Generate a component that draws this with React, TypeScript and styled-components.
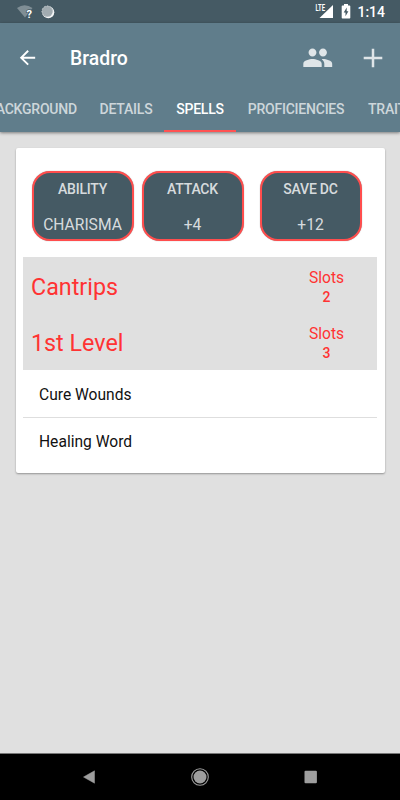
import React from "react";
import styled, { createGlobalStyle } from "styled-components";

const GlobalStyle = createGlobalStyle`
  *, *::before, *::after { box-sizing: border-box; }
  html, body { margin: 0; padding: 0; overflow: hidden; }
  body { font-family: Roboto, "Liberation Sans", sans-serif; }
`;

const Screen = styled.div`
  width: 400px;
  height: 800px;
  display: flex;
  flex-direction: column;
  overflow: hidden;
  background: #e0e0e0;
`;

const StatusBar = styled.header`
  height: 23px;
  flex: none;
  display: flex;
  align-items: center;
  padding: 0 15px 0 16px;
  background: #455a64;
  color: #fff;
`;

const StatusGroup = styled.div<{ $gap: number }>`
  display: flex;
  align-items: center;
  gap: ${(p) => p.$gap}px;
`;

const Spacer = styled.div`
  flex: 1;
`;

const Clock = styled.span`
  font-size: 14px;
  font-weight: 500;
  line-height: 23px;
  margin-left: 6px;
  padding-top: 1px;
`;

const Header = styled.div`
  height: 109px;
  flex: none;
  background: #607d8b;
  box-shadow: 0 1px 3px rgba(0, 0, 0, 0.45);
`;

const Toolbar = styled.div`
  height: 63px;
  display: flex;
  align-items: center;
  padding: 8px 0 0 16px;
`;

const IconButton = styled.button<{ $width: number }>`
  width: ${(p) => p.$width}px;
  height: 32px;
  padding: 0 0 1px;
  border: 0;
  background: none;
  display: flex;
  align-items: center;
  justify-content: center;
`;

const Title = styled.h1`
  flex: 1;
  margin: 0;
  padding: 0 0 0 31px;
  font-size: 19.4px;
  font-weight: 500;
  line-height: 24px;
  color: #fff;
`;

const Tabs = styled.nav`
  height: 46px;
  display: flex;
  justify-content: flex-start;
  overflow: hidden;
`;

const Tab = styled.a<{ $active?: boolean; $width: number; $shift?: number }>`
  flex: none;
  width: ${(p) => p.$width}px;
  margin-left: ${(p) => p.$shift ?? 0}px;
  display: flex;
  align-items: center;
  justify-content: center;
  padding-top: 2px;
  border-bottom: 2px solid ${(p) => (p.$active ? "#ff5252" : "transparent")};
  font-size: 14px;
  font-weight: 500;
  letter-spacing: -0.22px;
  white-space: nowrap;
  color: ${(p) => (p.$active ? "#fff" : "rgba(255,255,255,0.7)")};
`;

const Card = styled.main`
  margin: 16px 15px 0 15.5px;
  height: 325px;
  padding: 23px 8px 0 7.5px;
  border-radius: 2px;
  background: #fff;
  box-shadow: 0 1px 2px rgba(0, 0, 0, 0.35);
`;

const Stats = styled.section`
  display: flex;
  height: 86px;
  padding-left: 8.5px;
`;

const Stat = styled.div<{ $gap?: number }>`
  width: 102px;
  height: 70px;
  margin-left: ${(p) => p.$gap ?? 0}px;
  border: 2px solid #ff4d4d;
  border-radius: 18px;
  background: #455a64;
  box-shadow: 0 0 1px rgba(0, 0, 0, 0.45);
  display: flex;
  flex-direction: column;
  align-items: center;
  color: rgba(255, 255, 255, 0.8);
`;

const StatLabel = styled.span`
  margin-top: 8px;
  font-size: 14px;
  font-weight: 500;
  letter-spacing: -0.22px;
  line-height: 16px;
`;

const StatValue = styled.span`
  margin-top: 18px;
  font-size: 15.6px;
  line-height: 20px;
`;

const LevelRow = styled.div`
  height: 56.5px;
  padding: 0 31px 0 8px;
  display: flex;
  justify-content: space-between;
  align-items: center;
  background: #e0e0e0;
  color: #ff3333;
`;

const LevelName = styled.h2`
  margin: 0;
  padding-top: 3px;
  font-size: 23.3px;
  font-weight: 400;
  line-height: 28px;
`;

const Slots = styled.div`
  width: 39px;
  padding-top: 3px;
  display: flex;
  flex-direction: column;
  align-items: center;
  font-size: 15.6px;
  line-height: 20px;
`;

const SlotCount = styled.strong`
  font-size: 14px;
  font-weight: 500;
  line-height: 18px;
`;

const Spell = styled.div`
  height: 47px;
  padding: 2px 16px 0;
  display: flex;
  align-items: center;
  font-size: 15.6px;
  color: #111;
  & + & {
    height: 49px;
    padding-top: 0;
    border-top: 1px solid #dedede;
  }
`;

const NavBar = styled.footer`
  height: 47px;
  margin-top: auto;
  flex: none;
  border-top: 1px solid #777;
  background: #000;
  display: flex;
  align-items: center;
  justify-content: space-between;
  padding: 0 82px 1px 82px;
`;

const WifiIcon = () => (
  <svg width="19" height="16" viewBox="0 0 19 16">
    <path d="M1 4Q8.500-1.500 16.500 4L9 13.500Z" fill="#7f8e95" />
    <text x="10.500" y="13.500" fontSize="11" fontWeight="700" fontFamily="Roboto, sans-serif" fill="#fff" stroke="#455a64" strokeWidth="1.500" paintOrder="stroke">?</text>
  </svg>
);

const SyncIcon = () => (
  <svg width="14" height="14" viewBox="0 0 14 14">
    <circle cx="7.300" cy="7.300" r="6" fill="#f4f5f6" />
    <circle cx="6.300" cy="6.300" r="5.500" fill="#a1abb0" />
    <circle cx="6.300" cy="6.300" r="5.300" fill="none" stroke="#c5cccf" strokeWidth="1" strokeDasharray="1.500 1.500" />
  </svg>
);

const SignalIcon = () => (
  <svg width="19" height="17" viewBox="0 0 19 17">
    <path d="M18 2V15H4.500Z" fill="#fff" />
    <text x="0.500" y="7.800" fontSize="8.800" fontWeight="700" textLength="9.500" lengthAdjust="spacingAndGlyphs" fontFamily="Roboto, sans-serif" fill="#fff" stroke="#455a64" strokeWidth="1.600" paintOrder="stroke">LTE</text>
  </svg>
);

const BatteryIcon = () => (
  <svg width="10" height="15" viewBox="0 0 10 15">
    <path d="M3 0h4v1.500h1.500q.8 0 .8.800v11.400q0 .8-.8.800h-7q-.8 0-.8-.8V2.300q0-.8.800-.8H3Z" fill="#fff" />
    <path d="M5.700 3.600 2.700 8.400h1.800v3.800l2.900-5H5.700Z" fill="#455a64" />
  </svg>
);

const BackIcon = () => (
  <svg width="23.400" height="23.400" viewBox="0 0 24 24">
    <path d="M20 11H7.830l5.590-5.590L12 4l-8 8 8 8 1.410-1.410L7.830 13H20v-2z" fill="#fff" />
  </svg>
);

const PeopleIcon = () => (
  <svg width="31.500" height="31.500" viewBox="0 0 24 24">
    <path d="M16 11c1.660 0 2.990-1.340 2.990-3S17.660 5 16 5s-3 1.340-3 3 1.340 3 3 3zm-8 0c1.660 0 2.990-1.340 2.990-3S9.660 5 8 5 5 6.340 5 8s1.340 3 3 3zm0 2c-2.330 0-7 1.170-7 3.500V19h14v-2.500c0-2.330-4.670-3.500-7-3.500zm8 0c-.29 0-.62.020-.97.050 1.160.84 1.970 1.970 1.970 3.450V19h6v-2.500c0-2.330-4.670-3.500-7-3.500z" fill="#dfe5e8" />
  </svg>
);

const PlusIcon = () => (
  <svg width="20" height="20" viewBox="0 0 20 20">
    <path d="M10 .7V19.300M.7 10H19.300" fill="none" stroke="#dfe5e8" strokeWidth="2.500" />
  </svg>
);

export default function App() {
  return (
    <>
      <GlobalStyle />
      <Screen>
        <StatusBar>
          <StatusGroup $gap={6}>
            <WifiIcon />
            <SyncIcon />
          </StatusGroup>
          <Spacer />
          <StatusGroup $gap={7}>
            <SignalIcon />
            <BatteryIcon />
          </StatusGroup>
          <Clock>1:14</Clock>
        </StatusBar>
        <Header>
          <Toolbar>
            <IconButton $width={23} aria-label="Back"><BackIcon /></IconButton>
            <Title>Bradro</Title>
            <IconButton $width={54} aria-label="Party"><PeopleIcon /></IconButton>
            <IconButton $width={55} aria-label="Add"><PlusIcon /></IconButton>
          </Toolbar>
          <Tabs>
            <Tab $width={112} $shift={-24}>BACKGROUND</Tab>
            <Tab $width={76}>DETAILS</Tab>
            <Tab $width={72} $active>SPELLS</Tab>
            <Tab $width={120}>PROFICIENCIES</Tab>
            <Tab $width={70}>TRAITS</Tab>
          </Tabs>
        </Header>
        <Card>
          <Stats>
            <Stat><StatLabel>ABILITY</StatLabel><StatValue>CHARISMA</StatValue></Stat>
            <Stat $gap={8}><StatLabel>ATTACK</StatLabel><StatValue>+4</StatValue></Stat>
            <Stat $gap={16}><StatLabel>SAVE DC</StatLabel><StatValue>+12</StatValue></Stat>
          </Stats>
          <LevelRow>
            <LevelName>Cantrips</LevelName>
            <Slots>Slots<SlotCount>2</SlotCount></Slots>
          </LevelRow>
          <LevelRow>
            <LevelName>1st Level</LevelName>
            <Slots>Slots<SlotCount>3</SlotCount></Slots>
          </LevelRow>
          <Spell>Cure Wounds</Spell>
          <Spell>Healing Word</Spell>
        </Card>
        <NavBar>
          <svg width="14" height="14" viewBox="0 0 14 14">
            <path d="M1.500 7 12.500.8V13.200Z" fill="#9e9e9e" stroke="#9e9e9e" strokeWidth=".5" strokeLinejoin="round" />
          </svg>
          <svg width="18" height="18" viewBox="0 0 18 18">
            <circle cx="9" cy="9" r="8.300" fill="none" stroke="#9e9e9e" strokeWidth="1.100" />
            <circle cx="9" cy="9" r="6.500" fill="#9e9e9e" />
          </svg>
          <svg width="14" height="14" viewBox="0 0 14 14">
            <rect x=".5" y=".8" width="12.400" height="12.400" rx="1" fill="#9e9e9e" />
          </svg>
        </NavBar>
      </Screen>
    </>
  );
}
